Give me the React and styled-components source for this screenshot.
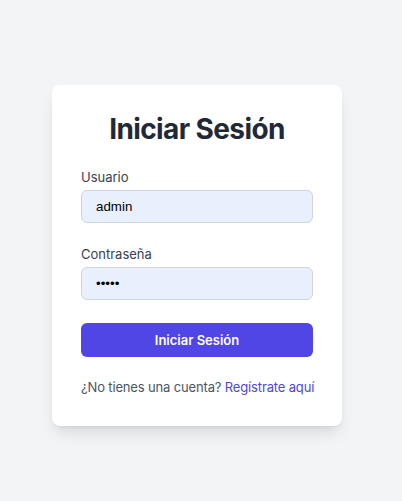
import React, { useState } from 'react';
import styled, { createGlobalStyle } from 'styled-components';

const GlobalStyle = createGlobalStyle`
  html, body {
    margin: 0;
    padding: 0;
    background: #f3f4f6;
  }

  body {
    font-family: Inter, "Liberation Sans", sans-serif;
  }
`;

const Page = styled.div`
  display: flex;
  justify-content: center;
  align-items: flex-start;
  min-height: 501px;
  padding: 85px 8px 0 0;
  box-sizing: border-box;
`;

const Card = styled.form`
  width: 290px;
  box-sizing: border-box;
  padding: 26px 29px 29px;
  background: #ffffff;
  border-radius: 8px;
  box-shadow: 0 10px 15px -3px rgba(0, 0, 0, 0.1), 0 4px 6px -4px rgba(0, 0, 0, 0.1);
  display: flex;
  flex-direction: column;
`;

const Title = styled.h1`
  margin: 0 0 20px;
  font-size: 28px;
  line-height: 36px;
  font-weight: 700;
  letter-spacing: -0.6px;
  color: #1f2937;
  text-align: center;
`;

const Field = styled.div`
  display: flex;
  flex-direction: column;
  margin-bottom: ${props => props.last ? '23px' : '21px'};
`;

const Label = styled.label`
  font-size: 13px;
  line-height: 20px;
  font-weight: 400;
  color: #374151;
  margin-bottom: 3px;
`;

const Input = styled.input`
  height: 33px;
  box-sizing: border-box;
  padding: 0 14px;
  border: 1px solid #d1d5db;
  border-radius: 6px;
  background: #e8f0fe;
  font-family: "Liberation Sans", Arial, sans-serif;
  font-size: 13.33px;
  color: #000000;
  outline: none;
`;

const Button = styled.button`
  height: 34px;
  border: none;
  border-radius: 6px;
  background: #4f46e5;
  color: #ffffff;
  font-family: Inter, "Liberation Sans", sans-serif;
  font-size: 13px;
  font-weight: 600;
  cursor: pointer;
`;

const Footer = styled.p`
  margin: 20px 0 0;
  font-size: 13px;
  line-height: 20px;
  letter-spacing: -0.15px;
  color: #4b5563;
  text-align: center;
  white-space: nowrap;
`;

const Link = styled.a`
  color: #4f46e5;
  font-weight: 400;
  text-decoration: none;
`;

function App() {
  const [user, setUser] = useState('admin');
  const [pass, setPass] = useState('admin');

  return (
    <>
      <GlobalStyle />
      <Page>
        <Card onSubmit={e => e.preventDefault()}>
          <Title>Iniciar Sesión</Title>
          <Field>
            <Label htmlFor="usuario">Usuario</Label>
            <Input id="usuario" value={user} onChange={e => setUser(e.target.value)} />
          </Field>
          <Field last>
            <Label htmlFor="clave">Contraseña</Label>
            <Input id="clave" type="password" value={pass} onChange={e => setPass(e.target.value)} />
          </Field>
          <Button type="submit">Iniciar Sesión</Button>
          <Footer>
            ¿No tienes una cuenta? <Link href="#">Regístrate aquí</Link>
          </Footer>
        </Card>
      </Page>
    </>
  );
}

export default App;
